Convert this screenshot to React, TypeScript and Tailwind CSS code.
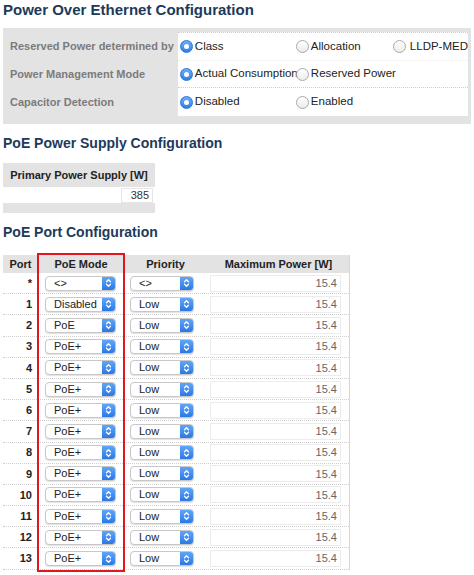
import React from 'react'

const font = { fontFamily: '"Liberation Sans", Arial, sans-serif' }

function Radio({ checked }: { checked?: boolean }) {
  return checked ? (
    <span className="inline-flex h-[13px] w-[13px] shrink-0 items-center justify-center rounded-full bg-gradient-to-b from-[#6aaef8] to-[#2f7fe8] border border-[#2a74d6]">
      <span className="h-[5px] w-[5px] rounded-full bg-white" />
    </span>
  ) : (
    <span className="inline-block h-[13px] w-[13px] shrink-0 rounded-full border border-[#a9a9a9] bg-gradient-to-b from-white to-[#ececec]" />
  )
}

function RadioOpt({ label, checked, className }: { label: string; checked?: boolean; className?: string }) {
  return (
    <div className={'flex items-center gap-[2px] whitespace-nowrap ' + (className ?? '')}>
      <Radio checked={checked} />
      <span className="text-[11.5px] text-[#222]">{label}</span>
    </div>
  )
}

function Select({ value, width }: { value: string; width: string }) {
  return (
    <div className={'flex h-[15px] items-stretch rounded-[4px] border border-[#c8c8c8] bg-white shadow-[0_1px_1px_rgba(0,0,0,0.12)] ' + width}>
      <span className="flex-1 pl-[8px] text-[11px] leading-[13px] text-[#222]">{value}</span>
      <span className="flex w-[13px] items-center justify-center rounded-r-[3px] bg-gradient-to-b from-[#5fa6f7] to-[#2a78e6]">
        <svg width="7" height="10" viewBox="0 0 7 10" fill="none" stroke="white" strokeWidth="1.3" strokeLinecap="round" strokeLinejoin="round">
          <path d="M1.5 3.8 L3.5 1.8 L5.5 3.8" />
          <path d="M1.5 6.2 L3.5 8.2 L5.5 6.2" />
        </svg>
      </span>
    </div>
  )
}

const rows = [
  { port: '*', mode: '<>', prio: '<>' },
  { port: '1', mode: 'Disabled', prio: 'Low' },
  { port: '2', mode: 'PoE', prio: 'Low' },
  ...Array.from({ length: 11 }, (_, i) => ({ port: String(i + 3), mode: 'PoE+', prio: 'Low' })),
]

export default function App() {
  return (
    <div className="h-[575px] w-[474px] overflow-hidden bg-white" style={font}>
      <h1 className="pl-[3px] text-[15px] font-bold leading-[20px] text-[#1d3a5a]">
        Power Over Ethernet Configuration
      </h1>

      <div className="ml-[3px] mr-[3px] mt-[8px] flex bg-[#e3e3e3] pb-[8px] pr-[3px] pt-[4px]">
        <div className="flex w-[176px] flex-col pl-[7px]">
          {['Reserved Power determined by', 'Power Management Mode', 'Capacitor Detection'].map(l => (
            <div key={l} className="flex h-[28px] items-center whitespace-nowrap text-[11px] font-bold text-[#7b7b7b]">
              {l}
            </div>
          ))}
        </div>
        <div className="flex flex-1 flex-col border-t border-dotted border-[#cfcfcf] bg-white">
          <div className="flex h-[28px] items-center border-b border-dotted border-[#ececec] pl-[2px]">
            <RadioOpt label="Class" checked className="w-[116px]" />
            <RadioOpt label="Allocation" className="w-[97px]" />
            <RadioOpt label="LLDP-MED" className="gap-[4px]" />
          </div>
          <div className="flex h-[27px] items-center border-b border-dotted border-[#cfcfcf] pl-[2px]">
            <RadioOpt label="Actual Consumption" checked className="w-[116px]" />
            <RadioOpt label="Reserved Power" />
          </div>
          <div className="flex h-[28px] items-center pl-[2px]">
            <RadioOpt label="Disabled" checked className="w-[116px]" />
            <RadioOpt label="Enabled" />
          </div>
        </div>
      </div>

      <h2 className="mt-[9px] pl-[3px] text-[14px] font-bold leading-[20px] text-[#1d3a5a]">
        PoE Power Supply Configuration
      </h2>

      <div className="ml-[3px] mt-[10px] w-[152px] bg-[#e3e3e3] pb-[10px]">
        <div className="flex h-[24px] items-center justify-center text-[11px] font-bold text-[#222]">
          Primary Power Supply [W]
        </div>
        <div className="flex h-[16px] items-center justify-end bg-white pr-[2px]">
          <div className="flex h-[15px] w-[32px] items-center justify-end border border-[#e6e6e6] pr-[3px] text-[11px] text-[#333]">
            385
          </div>
        </div>
      </div>

      <h2 className="mt-[9px] pl-[3px] text-[14px] font-bold leading-[20px] text-[#1d3a5a]">
        PoE Port Configuration
      </h2>

      <div className="relative ml-[3px] mt-[13px] w-[347px] border-r border-[#d6d6d6]">
        <div className="grid h-[18px] grid-cols-[35px_86px_83px_143px] items-center bg-[#e3e3e3] text-[11px] font-bold text-[#222]">
          <span className="text-center">Port</span>
          <span className="text-center">PoE Mode</span>
          <span className="text-center">Priority</span>
          <span className="text-center">Maximum Power [W]</span>
        </div>
        {rows.map(r => (
          <div
            key={r.port}
            className="grid h-[21.2px] grid-cols-[35px_86px_83px_143px] items-center border-b border-dotted border-[#cfcfcf] bg-white"
          >
            <span className="pr-[6px] text-right text-[11px] font-bold text-[#222]">{r.port}</span>
            <div className="pl-[7px]">
              <Select value={r.mode} width="w-[71px]" />
            </div>
            <div className="pl-[6px]">
              <Select value={r.prio} width="w-[64px]" />
            </div>
            <div className="pl-[3px]">
              <div className="flex h-[17px] w-[131px] items-center justify-end border border-[#ececec] pr-[3px] text-[11px] text-[#666]">
                15.4
              </div>
            </div>
          </div>
        ))}
        <div className="pointer-events-none absolute bottom-[-2px] left-[34px] top-[-2px] w-[88px] border-2 border-[#e3151d]" />
      </div>
    </div>
  )
}
